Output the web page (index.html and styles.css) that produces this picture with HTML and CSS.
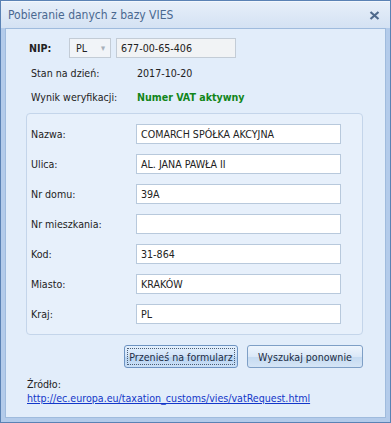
FILE: index.html
```html
<!DOCTYPE html>
<html lang="pl">
<head>
    <meta charset="UTF-8">
    <title>Pobieranie danych z bazy VIES</title>
    <link rel="stylesheet" href="styles.css">
</head>
<body>
    <div class="window">
        <div class="titlebar">
            <span class="title">Pobieranie danych z bazy VIES</span>
            <svg class="close" width="11" height="9" viewBox="0 0 11 9">
                <path d="M1.5 1 L9.5 8 M9.5 1 L1.5 8" stroke="#4f6a8c" stroke-width="2.2" fill="none"/>
            </svg>
        </div>

        <div class="client">
            <div class="nip-row">
                <span class="nip-label">NIP:</span>
                <div class="combo">PL <span class="arrow">&#9662;</span></div>
                <div class="field readonly nip-field">677-00-65-406</div>
            </div>
            <div class="info-row">
                <span class="info-label">Stan na dzień:</span>
                <span>2017-10-20</span>
            </div>
            <div class="info-row">
                <span class="info-label">Wynik weryfikacji:</span>
                <span class="status">Numer VAT aktywny</span>
            </div>

            <!-- dane podmiotu -->
            <div class="group">
                <div class="form-row"><span class="form-label">Nazwa:</span><div class="field">COMARCH SPÓŁKA AKCYJNA</div></div>
                <div class="form-row"><span class="form-label">Ulica:</span><div class="field">AL. JANA PAWŁA II</div></div>
                <div class="form-row"><span class="form-label">Nr domu:</span><div class="field">39A</div></div>
                <div class="form-row"><span class="form-label">Nr mieszkania:</span><div class="field"></div></div>
                <div class="form-row"><span class="form-label">Kod:</span><div class="field">31-864</div></div>
                <div class="form-row"><span class="form-label">Miasto:</span><div class="field">KRAKÓW</div></div>
                <div class="form-row"><span class="form-label">Kraj:</span><div class="field">PL</div></div>
            </div>

            <div class="buttons">
                <button class="btn focused"><span>Przenieś na formularz</span></button>
                <button class="btn"><span>Wyszukaj ponownie</span></button>
            </div>

            <div class="source">
                <div>Źródło:</div>
                <a href="#">http://ec.europa.eu/taxation_customs/vies/vatRequest.html</a>
            </div>
        </div>
    </div>
</body>
</html>
```

FILE: styles.css
```css
* {
    box-sizing: border-box;
    margin: 0;
    padding: 0;
}

body {
    width: 391px;
    height: 423px;
    font-family: "DejaVu Sans Condensed", "DejaVu Sans", sans-serif;
    font-stretch: condensed;
    font-size: 10.6px;
    color: #222;
    background: #fff;
}

.window {
    display: flex;
    flex-direction: column;
    height: 423px;
    border: 1px solid #5a82b4;
    background: #b3cbea;
    padding: 0 4px 4px 4px;
}

.titlebar {
    display: flex;
    align-items: center;
    justify-content: space-between;
    height: 27px;
    margin: 0 -4px;
    padding: 0 10px 1px 7px;
    background: linear-gradient(#e6eff9, #d4e2f3);
    border-top: 1px solid #f2f7fd;
}

.title {
    font-size: 12px;
    color: #4a6890;
}

.close {
    margin-top: 2px;
}

.client {
    flex: 1;
    border: 1px solid #9fbbdd;
    background: #e2edfa;
    padding: 9px 22px 0 20px;
}

.nip-row {
    display: flex;
    align-items: center;
    height: 20px;
    margin-bottom: 3px;
}

.nip-label {
    font-weight: bold;
    width: 40px;
    margin-left: 3px;
}

.combo {
    display: flex;
    justify-content: space-between;
    align-items: center;
    width: 42px;
    height: 20px;
    padding: 0 5px 0 6px;
    border: 1px solid #c3ccd6;
    background: #f1f4f8;
    margin-right: 5px;
}

.arrow {
    color: #a8b0ba;
    font-size: 9px;
}

.field {
    display: flex;
    align-items: center;
    width: 205px;
    height: 20px;
    padding: 0 4px;
    border: 1px solid #b8c9dc;
    background: #fff;
    white-space: nowrap;
}

.field.readonly {
    background: #f1f3f5;
    border-color: #c3ccd6;
}

.nip-field {
    width: 120px;
}

.info-row {
    display: flex;
    align-items: center;
    height: 24px;
    padding-left: 5px;
}

.info-label {
    width: 106px;
}

.status {
    font-weight: bold;
    color: #12861a;
}

.group {
    display: flex;
    flex-direction: column;
    gap: 10px;
    margin-top: 4px;
    padding: 10px 20px 10px 4px;
    border: 1px solid #c4d5ea;
    border-radius: 4px;
    background: #e7f0fb;
}

.form-row {
    display: flex;
    align-items: center;
    height: 20px;
}

.form-label {
    width: 105px;
}

.buttons {
    display: flex;
    justify-content: flex-end;
    gap: 9px;
    margin-top: 10px;
}

.btn {
    height: 23px;
    padding: 2px;
    font: inherit;
    color: #1c2c44;
    white-space: nowrap;
    border: 1px solid #7e9fc6;
    border-radius: 3px;
    background: linear-gradient(#eef5fd, #dbe8f7 50%, #c5daf1 51%, #d5e5f6);
}

.btn span {
    display: flex;
    align-items: center;
    justify-content: center;
    height: 100%;
    padding: 0 1px;
    border: 1px dotted transparent;
}

.btn:first-child {
    width: 114px;
}

.btn:last-child {
    width: 116px;
}

.btn.focused {
    border-color: #6d93c2;
    background: linear-gradient(#e4f0fd, #cfe2f8 50%, #b7d3f1 51%, #cbe0f7);
}

.btn.focused span {
    border-color: #4b5d74;
}

.source {
    margin-top: 9px;
    line-height: 14px;
    padding-left: 1px;
}

.source a {
    color: #1337c9;
}
```
